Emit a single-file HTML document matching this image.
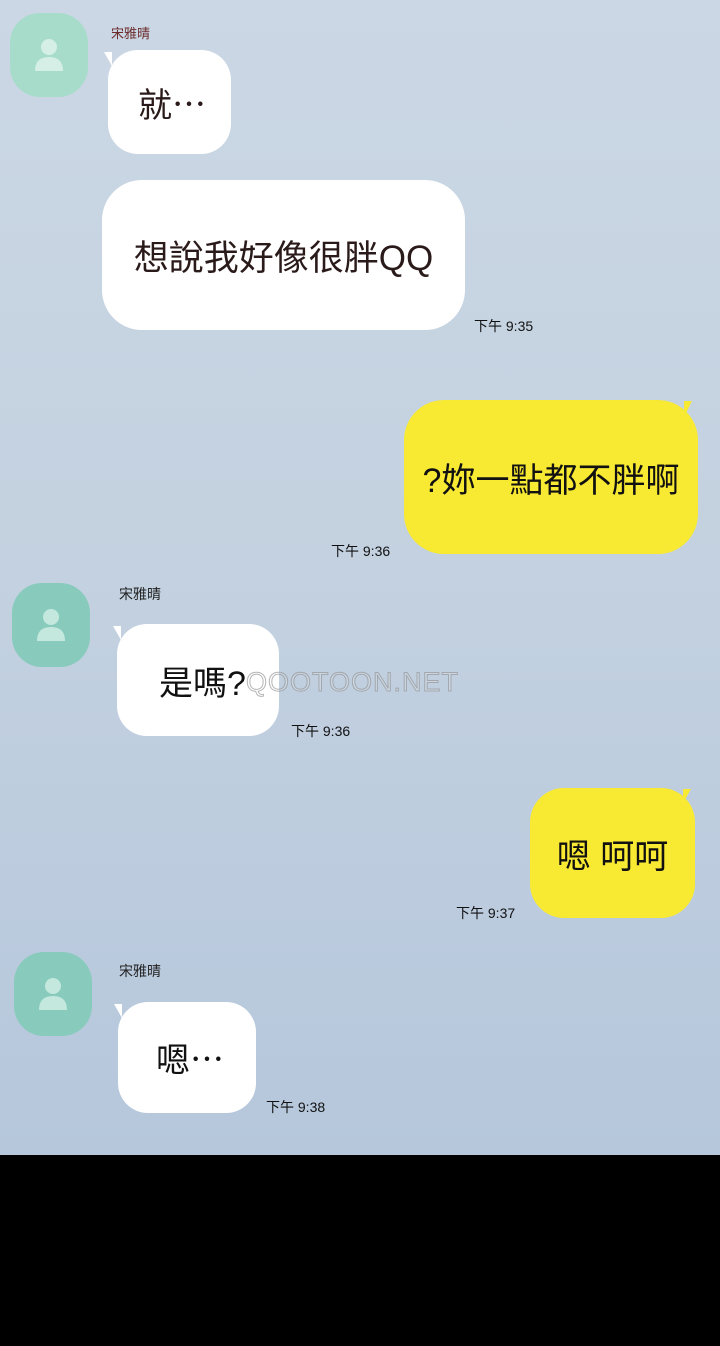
<!DOCTYPE html>
<html><head><meta charset="utf-8"><style>
*{margin:0;padding:0;box-sizing:border-box}
body{width:720px;height:1346px;position:relative;overflow:hidden;font-family:"Liberation Sans","Noto Sans CJK TC",sans-serif;background:#000}
.bg{position:absolute;left:0;top:0;width:720px;height:1155px;background:linear-gradient(180deg,#cbd7e4 0%,#c3d1e0 50%,#b6c7dc 100%)}
.av{position:absolute;width:78px;height:84px;border-radius:30px}
.av svg{position:absolute;left:22px;top:24px}
.b{position:absolute;background:#fff;border-radius:30px;color:#111;display:flex;align-items:center;justify-content:center;font-size:34px;white-space:nowrap}
.y{background:#f8e933}
.n{position:absolute;font-size:14px;color:#222}
.t{position:absolute;font-size:14px;color:#111}
.tail{position:absolute;width:0;height:0}
</style></head><body>
<div class="bg"></div>

<div class="av" style="left:10px;top:13px;background:#a7dccb"><svg width="34" height="36" viewBox="0 0 34 36"><circle cx="17" cy="10" r="8" fill="#d6efe6"/><path d="M3 34 Q3 20 17 20 Q31 20 31 34 Z" fill="#d6efe6"/></svg></div>
<div class="n" style="left:111px;top:23px;color:#6b2b2b;font-size:13px">宋雅晴</div>
<div class="b" style="left:108px;top:50px;width:123px;height:104px;justify-content:flex-start;padding-left:30px;color:#2a1a1a">就⋯</div>
<div class="tail" style="left:104px;top:52px;border-left:8px solid transparent;border-top:14px solid #fff"></div>

<div class="b" style="left:102px;top:180px;width:363px;height:150px;border-radius:40px;color:#2a1a1a;font-size:35px">想說我好像很胖QQ</div>
<div class="t" style="left:474px;top:316px">下午 9:35</div>

<div class="b y" style="left:404px;top:400px;width:294px;height:154px;border-radius:40px">?妳一點都不胖啊</div>
<div class="tail" style="left:684px;top:401px;border-right:8px solid transparent;border-top:16px solid #f8e933"></div>
<div class="t" style="left:331px;top:541px">下午 9:36</div>

<div class="av" style="left:12px;top:583px;background:#88cbbd"><svg width="34" height="36" viewBox="0 0 34 36"><circle cx="17" cy="10" r="8" fill="#c4e8de"/><path d="M3 34 Q3 20 17 20 Q31 20 31 34 Z" fill="#c4e8de"/></svg></div>
<div class="n" style="left:119px;top:584px">宋雅晴</div>
<div class="b" style="left:117px;top:624px;width:162px;height:112px;justify-content:flex-start;padding-left:42px">是嗎?</div>
<div class="tail" style="left:113px;top:626px;border-left:8px solid transparent;border-top:14px solid #fff"></div>
<div style="position:absolute;left:246px;top:667px;font-size:27px;color:rgba(255,255,255,.15);-webkit-text-stroke:1px rgba(150,150,150,.7);letter-spacing:1px">QOOTOON.NET</div>
<div class="t" style="left:291px;top:721px">下午 9:36</div>

<div class="b y" style="left:530px;top:788px;width:165px;height:130px;border-radius:34px">嗯 呵呵</div>
<div class="tail" style="left:683px;top:789px;border-right:8px solid transparent;border-top:14px solid #f8e933"></div>
<div class="t" style="left:456px;top:903px">下午 9:37</div>

<div class="av" style="left:14px;top:952px;background:#88cbbd"><svg width="34" height="36" viewBox="0 0 34 36"><circle cx="17" cy="10" r="8" fill="#c4e8de"/><path d="M3 34 Q3 20 17 20 Q31 20 31 34 Z" fill="#c4e8de"/></svg></div>
<div class="n" style="left:119px;top:961px">宋雅晴</div>
<div class="b" style="left:118px;top:1002px;width:138px;height:111px;justify-content:flex-start;padding-left:38px">嗯⋯</div>
<div class="tail" style="left:114px;top:1004px;border-left:8px solid transparent;border-top:14px solid #fff"></div>
<div class="t" style="left:266px;top:1097px">下午 9:38</div>
</body></html>
